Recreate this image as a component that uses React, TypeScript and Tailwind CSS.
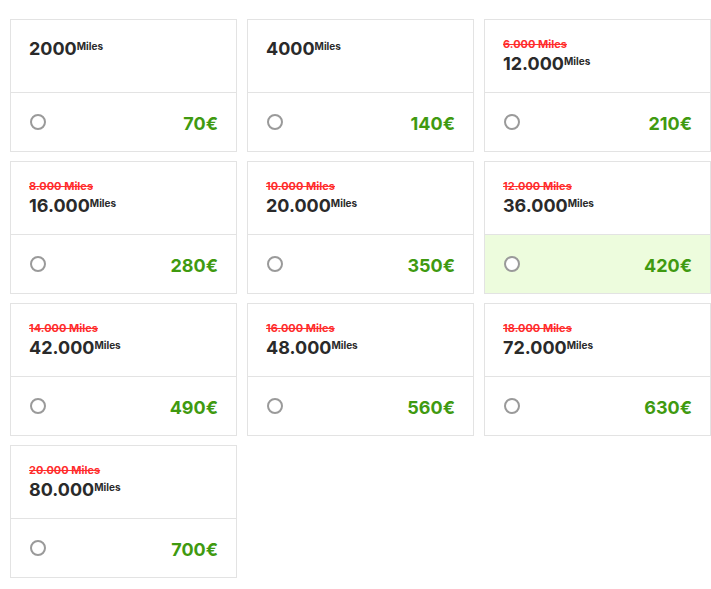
import React from "react";

type Item = { old?: string; miles: string; price: string; selected?: boolean };

const items: Item[] = [
  { miles: "2000", price: "70€" },
  { miles: "4000", price: "140€" },
  { old: "6.000 Miles", miles: "12.000", price: "210€" },
  { old: "8.000 Miles", miles: "16.000", price: "280€" },
  { old: "10.000 Miles", miles: "20.000", price: "350€" },
  { old: "12.000 Miles", miles: "36.000", price: "420€", selected: true },
  { old: "14.000 Miles", miles: "42.000", price: "490€" },
  { old: "16.000 Miles", miles: "48.000", price: "560€" },
  { old: "18.000 Miles", miles: "72.000", price: "630€" },
  { old: "20.000 Miles", miles: "80.000", price: "700€" },
];

function Card({ item }: { item: Item }) {
  return (
    <div className="flex h-[133px] flex-col border border-[#e3e3e3] bg-white">
      <div className="flex h-[72px] flex-col px-[18px] pt-[18px]">
        {item.old && (
          <div className="mb-[2px] text-[11px] font-bold leading-[13px] text-[#ff2d2d] line-through">
            {item.old}
          </div>
        )}
        <div className="flex items-start text-[#2a2a2a]">
          <span className="text-[18px] font-bold leading-[22px]">{item.miles}</span>
          <span className="mt-[2px] text-[10px] font-bold leading-[12px]">Miles</span>
        </div>
      </div>
      <div
        className={
          "flex flex-1 items-center justify-between border-t border-[#e3e3e3] pl-[19px] pr-[18px] " +
          (item.selected ? "bg-[#edfcdd]" : "bg-white")
        }
      >
        <span className="block h-[16px] w-[16px] rounded-full border-2 border-[#9a9a9a] bg-white" />
        <span className="mt-[3px] text-[18px] font-bold leading-[22px] text-[#3f9a10]">{item.price}</span>
      </div>
    </div>
  );
}

export default function App() {
  return (
    <div
      className="min-h-[589px] w-[711px] bg-white pl-[10px] pt-[19px]"
      style={{ fontFamily: "Inter, 'DejaVu Sans', sans-serif" }}
    >
      <div className="grid grid-cols-3 gap-x-[10px] gap-y-[9px]">
        {items.map((it, i) => (
          <Card key={i} item={it} />
        ))}
      </div>
    </div>
  );
}
